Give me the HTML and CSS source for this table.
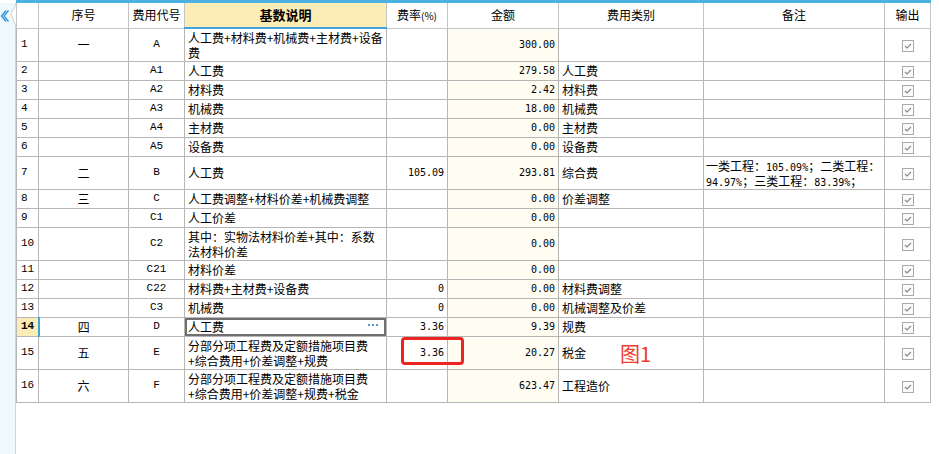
FILE: index.html
```html
<!DOCTYPE html>
<html lang="zh-CN">
<head>
<meta charset="utf-8">
<title>费用汇总</title>
<link rel="stylesheet" href="styles.css">
</head>
<body>
<div class="app">
  <aside class="side">
    <svg class="side-tab" width="16" height="30" viewBox="0 0 16 30">
      <rect x="0" y="0" width="16" height="3" fill="#ffffff"/>
      <polygon points="16,4 11,14 16,27" fill="#ffffff"/>
      <polyline points="16,4 11,14 16,27" fill="none" stroke="#cfcfcf" stroke-width="1"/>
      <polyline points="6,10.5 1.5,16 6,21.5" fill="none" stroke="#1f90d2" stroke-width="1.2"/>
      <polyline points="8.5,10.5 4,16 8.5,21.5" fill="none" stroke="#1f90d2" stroke-width="1.2"/>
    </svg>
  </aside>
  <main class="sheet">
    <div class="topbar"></div>
    <table class="grid">
      <colgroup>
        <col class="c-no"><col class="c-seq"><col class="c-code"><col class="c-desc"><col class="c-rate"><col class="c-amt"><col class="c-type"><col class="c-note"><col class="c-out">
      </colgroup>
      <thead>
        <tr>
          <th></th><th>序号</th><th>费用代号</th><th class="h-sel">基数说明</th><th>费率<span class="pct">(%)</span></th><th>金额</th><th>费用类别</th><th>备注</th><th>输出</th>
        </tr>
      </thead>
      <tbody>
        <tr class="dbl"><td class="no">1</td><td class="seq">一</td><td class="code">A</td><td><div class="ln">人工费+材料费+机械费+主材费+设备</div><div class="ln">费</div></td><td class="num"></td><td class="num amt">300.00</td><td></td><td></td><td class="out"><svg class="chk" width="12" height="12" viewBox="0 0 12 12"><rect x="0.5" y="0.5" width="11" height="11" fill="#fbfbfb" stroke="#a9a9a9"/><polyline points="3,6 5,8 9,4" fill="none" stroke="#7d8a98" stroke-width="1.1"/></svg></td></tr>
        <tr><td class="no">2</td><td class="seq"></td><td class="code">A1</td><td>人工费</td><td class="num"></td><td class="num amt">279.58</td><td>人工费</td><td></td><td class="out"><svg class="chk" width="12" height="12" viewBox="0 0 12 12"><rect x="0.5" y="0.5" width="11" height="11" fill="#fbfbfb" stroke="#a9a9a9"/><polyline points="3,6 5,8 9,4" fill="none" stroke="#7d8a98" stroke-width="1.1"/></svg></td></tr>
        <tr><td class="no">3</td><td class="seq"></td><td class="code">A2</td><td>材料费</td><td class="num"></td><td class="num amt">2.42</td><td>材料费</td><td></td><td class="out"><svg class="chk" width="12" height="12" viewBox="0 0 12 12"><rect x="0.5" y="0.5" width="11" height="11" fill="#fbfbfb" stroke="#a9a9a9"/><polyline points="3,6 5,8 9,4" fill="none" stroke="#7d8a98" stroke-width="1.1"/></svg></td></tr>
        <tr><td class="no">4</td><td class="seq"></td><td class="code">A3</td><td>机械费</td><td class="num"></td><td class="num amt">18.00</td><td>机械费</td><td></td><td class="out"><svg class="chk" width="12" height="12" viewBox="0 0 12 12"><rect x="0.5" y="0.5" width="11" height="11" fill="#fbfbfb" stroke="#a9a9a9"/><polyline points="3,6 5,8 9,4" fill="none" stroke="#7d8a98" stroke-width="1.1"/></svg></td></tr>
        <tr><td class="no">5</td><td class="seq"></td><td class="code">A4</td><td>主材费</td><td class="num"></td><td class="num amt">0.00</td><td>主材费</td><td></td><td class="out"><svg class="chk" width="12" height="12" viewBox="0 0 12 12"><rect x="0.5" y="0.5" width="11" height="11" fill="#fbfbfb" stroke="#a9a9a9"/><polyline points="3,6 5,8 9,4" fill="none" stroke="#7d8a98" stroke-width="1.1"/></svg></td></tr>
        <tr><td class="no">6</td><td class="seq"></td><td class="code">A5</td><td>设备费</td><td class="num"></td><td class="num amt">0.00</td><td>设备费</td><td></td><td class="out"><svg class="chk" width="12" height="12" viewBox="0 0 12 12"><rect x="0.5" y="0.5" width="11" height="11" fill="#fbfbfb" stroke="#a9a9a9"/><polyline points="3,6 5,8 9,4" fill="none" stroke="#7d8a98" stroke-width="1.1"/></svg></td></tr>
        <tr class="dbl"><td class="no">7</td><td class="seq">二</td><td class="code">B</td><td>人工费</td><td class="num">105.09</td><td class="num amt">293.81</td><td>综合费</td><td class="note"><div class="ln">一类工程：<span class="m">105.09%</span>；二类工程：</div><div class="ln"><span class="m">94.97%</span>；三类工程：<span class="m">83.39%</span>；</div></td><td class="out"><svg class="chk" width="12" height="12" viewBox="0 0 12 12"><rect x="0.5" y="0.5" width="11" height="11" fill="#fbfbfb" stroke="#a9a9a9"/><polyline points="3,6 5,8 9,4" fill="none" stroke="#7d8a98" stroke-width="1.1"/></svg></td></tr>
        <tr><td class="no">8</td><td class="seq">三</td><td class="code">C</td><td>人工费调整+材料价差+机械费调整</td><td class="num"></td><td class="num amt">0.00</td><td>价差调整</td><td></td><td class="out"><svg class="chk" width="12" height="12" viewBox="0 0 12 12"><rect x="0.5" y="0.5" width="11" height="11" fill="#fbfbfb" stroke="#a9a9a9"/><polyline points="3,6 5,8 9,4" fill="none" stroke="#7d8a98" stroke-width="1.1"/></svg></td></tr>
        <tr><td class="no">9</td><td class="seq"></td><td class="code">C1</td><td>人工价差</td><td class="num"></td><td class="num amt">0.00</td><td></td><td></td><td class="out"><svg class="chk" width="12" height="12" viewBox="0 0 12 12"><rect x="0.5" y="0.5" width="11" height="11" fill="#fbfbfb" stroke="#a9a9a9"/><polyline points="3,6 5,8 9,4" fill="none" stroke="#7d8a98" stroke-width="1.1"/></svg></td></tr>
        <tr class="dbl"><td class="no">10</td><td class="seq"></td><td class="code">C2</td><td><div class="ln">其中：实物法材料价差+其中：系数</div><div class="ln">法材料价差</div></td><td class="num"></td><td class="num amt">0.00</td><td></td><td></td><td class="out"><svg class="chk" width="12" height="12" viewBox="0 0 12 12"><rect x="0.5" y="0.5" width="11" height="11" fill="#fbfbfb" stroke="#a9a9a9"/><polyline points="3,6 5,8 9,4" fill="none" stroke="#7d8a98" stroke-width="1.1"/></svg></td></tr>
        <tr><td class="no">11</td><td class="seq"></td><td class="code">C21</td><td>材料价差</td><td class="num"></td><td class="num amt">0.00</td><td></td><td></td><td class="out"><svg class="chk" width="12" height="12" viewBox="0 0 12 12"><rect x="0.5" y="0.5" width="11" height="11" fill="#fbfbfb" stroke="#a9a9a9"/><polyline points="3,6 5,8 9,4" fill="none" stroke="#7d8a98" stroke-width="1.1"/></svg></td></tr>
        <tr><td class="no">12</td><td class="seq"></td><td class="code">C22</td><td>材料费+主材费+设备费</td><td class="num">0</td><td class="num amt">0.00</td><td>材料费调整</td><td></td><td class="out"><svg class="chk" width="12" height="12" viewBox="0 0 12 12"><rect x="0.5" y="0.5" width="11" height="11" fill="#fbfbfb" stroke="#a9a9a9"/><polyline points="3,6 5,8 9,4" fill="none" stroke="#7d8a98" stroke-width="1.1"/></svg></td></tr>
        <tr><td class="no">13</td><td class="seq"></td><td class="code">C3</td><td>机械费</td><td class="num">0</td><td class="num amt">0.00</td><td>机械调整及价差</td><td></td><td class="out"><svg class="chk" width="12" height="12" viewBox="0 0 12 12"><rect x="0.5" y="0.5" width="11" height="11" fill="#fbfbfb" stroke="#a9a9a9"/><polyline points="3,6 5,8 9,4" fill="none" stroke="#7d8a98" stroke-width="1.1"/></svg></td></tr>
        <tr class="cur"><td class="no">14</td><td class="seq">四</td><td class="code">D</td><td class="edit"><div class="edit-row"><span>人工费</span><svg class="dots" width="11" height="3" viewBox="0 0 11 3"><rect x="0" y="0" width="2" height="2" fill="#5b90d4"/><rect x="4" y="0" width="2" height="2" fill="#5b90d4"/><rect x="8" y="0" width="2" height="2" fill="#5b90d4"/></svg></div></td><td class="num">3.36</td><td class="num amt">9.39</td><td>规费</td><td></td><td class="out"><svg class="chk" width="12" height="12" viewBox="0 0 12 12"><rect x="0.5" y="0.5" width="11" height="11" fill="#fbfbfb" stroke="#a9a9a9"/><polyline points="3,6 5,8 9,4" fill="none" stroke="#7d8a98" stroke-width="1.1"/></svg></td></tr>
        <tr class="dbl"><td class="no">15</td><td class="seq">五</td><td class="code">E</td><td><div class="ln">分部分项工程费及定额措施项目费</div><div class="ln">+综合费用+价差调整+规费</div></td><td class="num">3.36</td><td class="num amt">20.27</td><td>税金</td><td></td><td class="out"><svg class="chk" width="12" height="12" viewBox="0 0 12 12"><rect x="0.5" y="0.5" width="11" height="11" fill="#fbfbfb" stroke="#a9a9a9"/><polyline points="3,6 5,8 9,4" fill="none" stroke="#7d8a98" stroke-width="1.1"/></svg></td></tr>
        <tr class="dbl"><td class="no">16</td><td class="seq">六</td><td class="code">F</td><td><div class="ln">分部分项工程费及定额措施项目费</div><div class="ln">+综合费用+价差调整+规费+税金</div></td><td class="num"></td><td class="num amt">623.47</td><td>工程造价</td><td></td><td class="out"><svg class="chk" width="12" height="12" viewBox="0 0 12 12"><rect x="0.5" y="0.5" width="11" height="11" fill="#fbfbfb" stroke="#a9a9a9"/><polyline points="3,6 5,8 9,4" fill="none" stroke="#7d8a98" stroke-width="1.1"/></svg></td></tr>
      </tbody>
    </table>
    <div class="mark-box"></div>
    <div class="mark-label">图1</div>
  </main>
</div>
</body>
</html>
```

FILE: styles.css
```css
* { box-sizing: border-box; }
html, body { margin: 0; padding: 0; background: #ffffff; }
body {
  font-family: "Noto Sans CJK SC", "Noto Sans", sans-serif;
  font-size: 12px;
  color: #000000;
}
.app { display: flex; height: 454px; overflow: hidden; }
.side {
  flex: none;
  width: 16px;
  background: #eef9fd;
  border-right: 1px solid #d4d4d4;
  position: relative;
}
.side-tab { display: block; }
.sheet { flex: none; width: 915px; position: relative; }
.topbar { height: 3px; background: #4bb1e0; }

.grid {
  border-collapse: collapse;
  table-layout: fixed;
  width: 915px;
}
.c-no { width: 22px; }
.c-seq { width: 90px; }
.c-code { width: 56px; }
.c-desc { width: 202px; }
.c-rate { width: 61px; }
.c-amt { width: 111px; }
.c-type { width: 145px; }
.c-note { width: 181px; }
.c-out { width: 46px; }

.grid th {
  height: 25px;
  padding: 0;
  border: 1px solid #c4c4c4;
  border-top: none;
  font-weight: normal;
  font-size: 12px;
  text-align: center;
  vertical-align: middle;
  line-height: 14px;
}
.grid th.h-sel {
  background: #feecb6;
  border-bottom: 2px solid #3ea6dc;
  font-weight: bold;
  font-size: 13px;
}
.pct { font-size: 10px; }

.grid td {
  border: 1px solid #b6b6b6;
  padding: 0 3px;
  height: 19px;
  line-height: 15px;
  vertical-align: middle;
  white-space: nowrap;
  overflow: hidden;
}
.grid tr.dbl td { height: 33px; }
.ln { height: 15px; line-height: 15px; white-space: nowrap; }

.grid td.no {
  font-family: "Liberation Mono", monospace;
  font-size: 11px;
  padding: 0 0 0 4px;
}
.grid td.seq { text-align: center; }
.grid td.code {
  text-align: center;
  font-family: "Liberation Mono", monospace;
  font-size: 11px;
}
.grid td.num {
  text-align: right;
  font-family: "DejaVu Sans Mono", monospace;
  font-size: 10px;
  padding-right: 3px;
}
.grid td.amt { background: #fffdf2; }
.grid td.note { padding-left: 2px; }
.m { font-family: "DejaVu Sans Mono", monospace; font-size: 10px; }
.grid td.out { text-align: center; padding: 0; }
.chk { display: inline-block; vertical-align: middle; }

.grid tr.cur td.no {
  background: #feecb6;
  font-weight: bold;
  border-right: 2px solid #3ea6dc;
}
.grid td.edit {
  box-shadow: inset 0 0 0 2px #6f6f6f;
  padding: 0 7px 0 3px;
}
.edit-row { display: flex; justify-content: space-between; align-items: center; }
.dots { display: block; margin-top: -2px; }

.mark-box {
  position: absolute;
  left: 385px;
  top: 337px;
  width: 63px;
  height: 28px;
  border: 3px solid #ee2420;
  border-radius: 4px;
}
.mark-label {
  position: absolute;
  left: 604px;
  top: 341px;
  font-size: 20px;
  line-height: 26px;
  color: #f0392c;
}
```
